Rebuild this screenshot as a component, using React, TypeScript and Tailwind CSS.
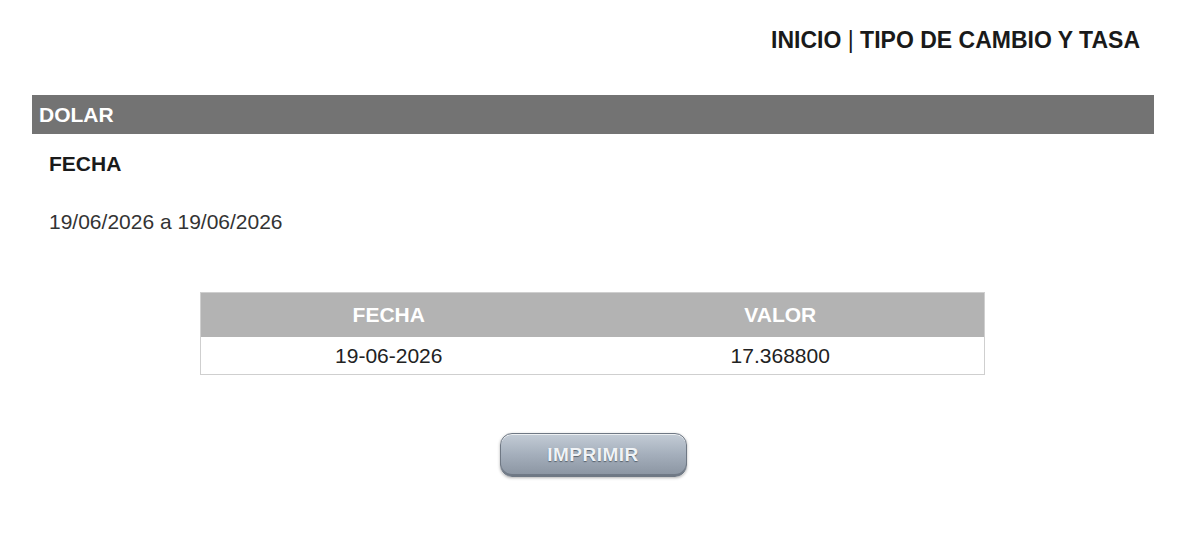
export default function App() {
  return (
    <div className="min-h-[546px] bg-white font-['Liberation_Sans',Arial,sans-serif] text-[#222]">
      <div className="flex justify-end pr-[60px] pt-[26px]">
        <h1 className="text-[23px] font-bold leading-[28px] text-[#1a1a1a]">
          INICIO <span className="font-normal">|</span> TIPO DE CAMBIO Y TASA
        </h1>
      </div>

      <div className="mx-[32px] mr-[46px] mt-[41px]">
        <div className="flex h-[39px] items-center bg-[#737373] px-[7px] text-[21px] font-bold text-white">
          DOLAR
        </div>

        <div className="px-[17px]">
          <div className="mt-[17px] text-[21px] font-bold leading-[26px] text-[#1a1a1a]">FECHA</div>
          <div className="mt-[32px] text-[21px] leading-[26px] text-[#333]">
            19/06/2026 a 19/06/2026
          </div>
        </div>

        <div className="ml-[168px] mt-[57px] w-[785px]">
          <table className="w-full table-fixed border-collapse border border-[#cfcfcf] text-center">
            <thead>
              <tr className="h-[44px] bg-[#b3b3b3] text-[21px] font-bold text-white">
                <th className="w-[376px]">FECHA</th>
                <th>VALOR</th>
              </tr>
            </thead>
            <tbody>
              <tr className="h-[38px] text-[21px] text-[#222]">
                <td>19-06-2026</td>
                <td>17.368800</td>
              </tr>
            </tbody>
          </table>
        </div>

        <div className="mt-[58px] flex justify-center">
          <button className="h-[44px] w-[187px] rounded-[12px] border border-[#6f7884] bg-gradient-to-b from-[#c3ccd6] via-[#a4aebb] to-[#8a94a1] text-[19px] font-bold tracking-wide text-[#f0f3f6] shadow-[inset_0_1px_0_rgba(255,255,255,0.7),inset_0_-2px_0_rgba(60,70,80,0.35),0_1px_3px_rgba(0,0,0,0.3)] [text-shadow:0_1px_1px_rgba(40,50,60,0.6)]">
            IMPRIMIR
          </button>
        </div>
      </div>
    </div>
  );
}
